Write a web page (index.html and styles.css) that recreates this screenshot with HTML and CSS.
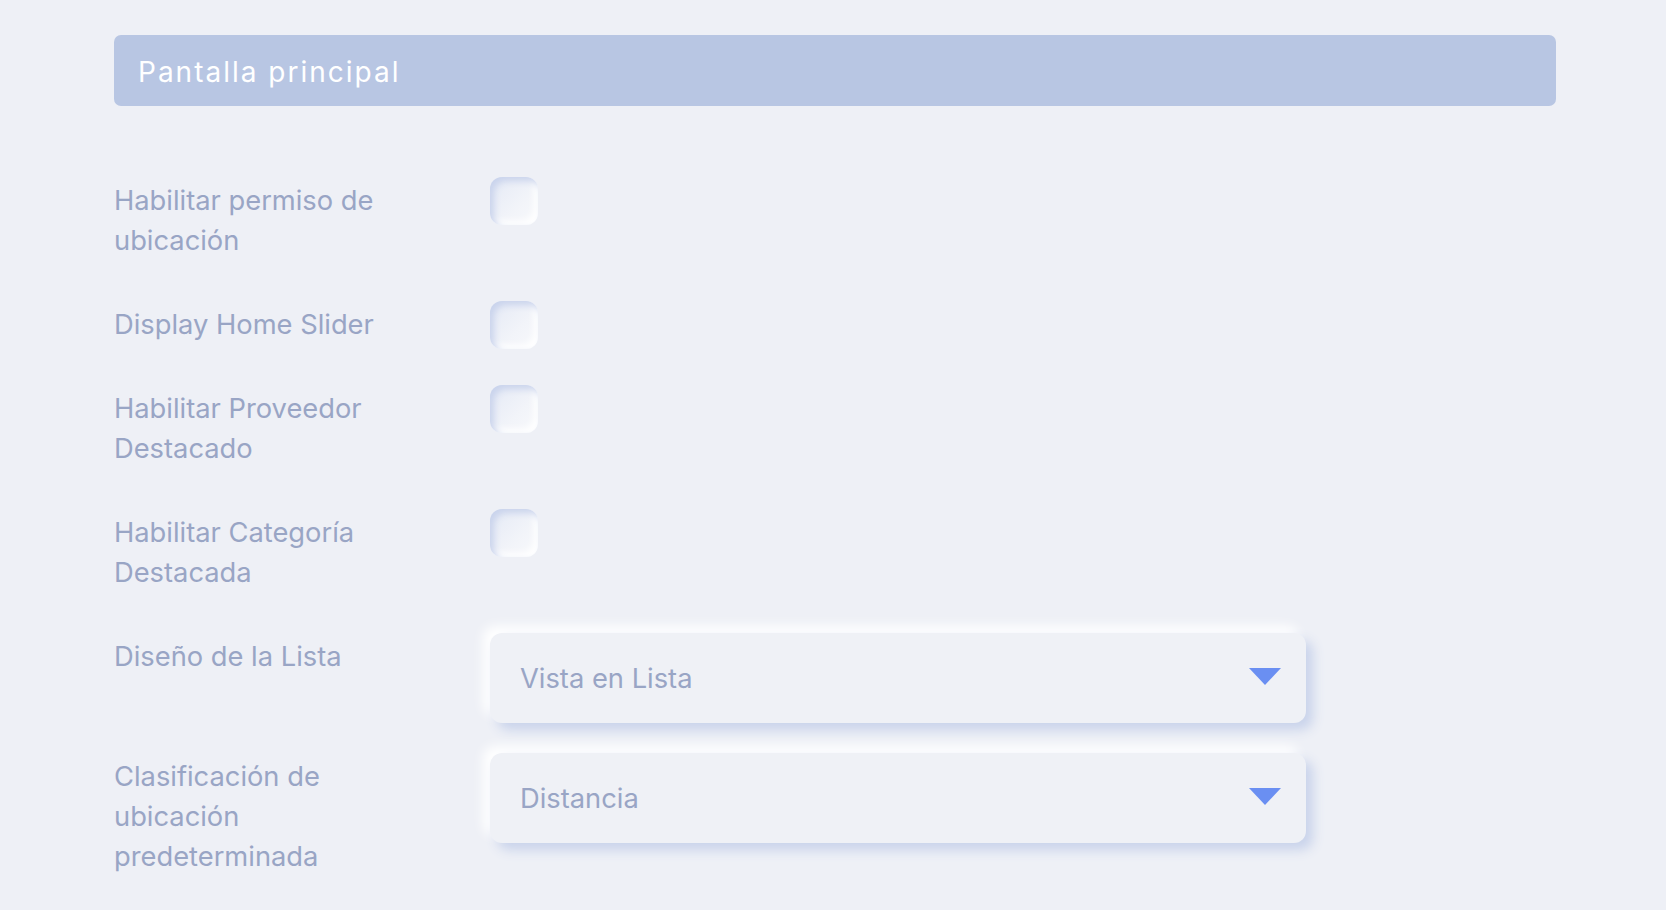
FILE: index.html
```html
<!DOCTYPE html>
<html lang="es">
<head>
<meta charset="utf-8">
<title>Pantalla principal</title>
<link rel="stylesheet" href="styles.css">
</head>
<body>
<main class="page">
  <div class="section-header">Pantalla principal</div>
  <form class="settings">
    <div class="row">
      <label class="label" for="c1">Habilitar permiso de<br>ubicación</label>
      <span class="check" id="c1"></span>
    </div>
    <div class="row">
      <label class="label" for="c2">Display Home Slider</label>
      <span class="check" id="c2"></span>
    </div>
    <div class="row">
      <label class="label" for="c3">Habilitar Proveedor<br>Destacado</label>
      <span class="check" id="c3"></span>
    </div>
    <div class="row">
      <label class="label" for="c4">Habilitar Categoría<br>Destacada</label>
      <span class="check" id="c4"></span>
    </div>
    <div class="row">
      <label class="label">Diseño de la Lista</label>
      <div class="select">
        <span class="select-value">Vista en Lista</span>
        <svg class="caret" width="32" height="17" viewBox="0 0 32 17"><polygon points="0,0 32,0 16,17" fill="#6a8ff2"/></svg>
      </div>
    </div>
    <div class="row">
      <label class="label">Clasificación de<br>ubicación<br>predeterminada</label>
      <div class="select">
        <span class="select-value">Distancia</span>
        <svg class="caret" width="32" height="17" viewBox="0 0 32 17"><polygon points="0,0 32,0 16,17" fill="#6a8ff2"/></svg>
      </div>
    </div>
  </form>
</main>
</body>
</html>
```
FILE: styles.css
```css
html, body {
  margin: 0;
  padding: 0;
  background: #eef0f6;
}
body {
  font-family: Inter, "Noto Sans", "Liberation Sans", sans-serif;
  overflow: hidden;
}
.page {
  padding: 35px 0 0 114px;
  width: 1442px;
}
.section-header {
  height: 71px;
  box-sizing: border-box;
  background: #b8c6e3;
  border-radius: 7px;
  color: #ffffff;
  font-size: 28px;
  letter-spacing: 2px;
  line-height: 71px;
  padding: 2px 0 0 24px;
}
.settings {
  margin-top: 71px;
  display: flex;
  flex-direction: column;
  gap: 30px;
}
.row {
  display: flex;
  align-items: flex-start;
}
.label {
  width: 376px;
  flex: none;
  padding: 4px 0 10px;
  font-size: 27.3px;
  line-height: 40px;
  color: #99a5c5;
}
.check {
  width: 48px;
  height: 48px;
  border-radius: 12px;
  background: linear-gradient(135deg, #e4e9f5 0%, #f2f4f9 60%, #f8f9fc 100%);
  box-shadow: inset 4px 4px 7px #c9d3ec, inset -4px -4px 7px #ffffff;
}
.select {
  width: 816px;
  height: 90px;
  box-sizing: border-box;
  border-radius: 12px;
  background: #eff1f6;
  box-shadow: 7px 7px 12px #c9d3eb, -7px -7px 12px #ffffff;
  display: flex;
  align-items: center;
  justify-content: space-between;
  padding: 0 25px 0 30px;
}
.select-value {
  font-size: 27.3px;
  color: #99a5c5;
}
.caret {
  display: block;
  margin-top: -4px;
}
```
